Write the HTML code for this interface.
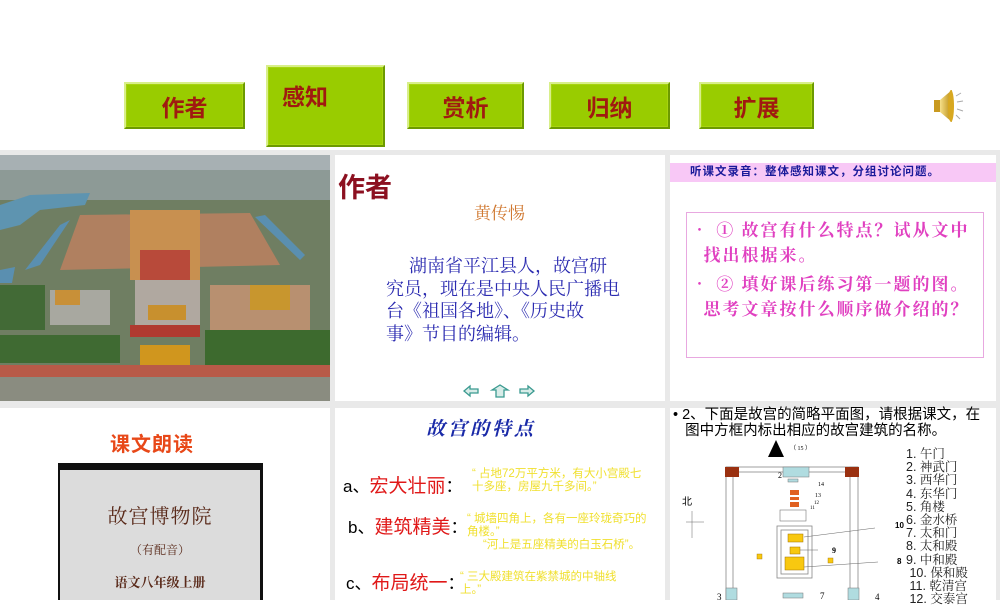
<!DOCTYPE html>
<html><head><meta charset="utf-8"><style>
*{margin:0;padding:0;box-sizing:border-box}
body{width:1000px;height:600px;overflow:hidden;background:#fff;position:relative;font-family:"Liberation Sans","Noto Sans CJK SC",sans-serif}
.a{position:absolute}
.btn{position:absolute;background:#99cc00;border:2px solid #d8ef8a;border-right-color:#6c9a00;border-bottom-color:#6c9a00;box-shadow:inset 0 0 0 1px #a8d410;color:#a01a10;font-weight:bold;font-size:23px;text-align:center;font-family:"Noto Sans CJK SC",sans-serif}
.gray{background:#e9e9e9}
.cjk{font-family:"Noto Serif CJK SC","Noto Sans CJK SC",serif}
.y{color:#f0e030;font-size:11.5px;line-height:13px;white-space:nowrap}
</style></head><body>
<div class="btn" style="left:124px;top:82px;width:121px;height:47px;line-height:44px">作者</div>
<div class="btn" style="left:266px;top:65px;width:119px;height:82px;line-height:56px;text-align:left;padding-left:14px">感知</div>
<div class="btn" style="left:407px;top:82px;width:117px;height:47px;line-height:44px">赏析</div>
<div class="btn" style="left:549px;top:82px;width:121px;height:47px;line-height:44px">归纳</div>
<div class="btn" style="left:699px;top:82px;width:115px;height:47px;line-height:44px">扩展</div>
<svg class="a" style="left:930px;top:88px" width="40" height="36" viewBox="0 0 40 36">
<defs><linearGradient id="sp" x1="0" x2="1"><stop offset="0" stop-color="#f6e08a"/><stop offset="1" stop-color="#b88a10"/></linearGradient></defs>
<rect x="4" y="12" width="7" height="12" fill="#c99a20"/>
<path d="M10 12 L22 2 L22 34 L10 24Z" fill="url(#sp)"/>
<ellipse cx="21" cy="18" rx="3" ry="16" fill="#d8a820"/>
<g stroke="#aaa" stroke-width="1"><line x1="26" y1="8" x2="31" y2="5"/><line x1="27" y1="14" x2="33" y2="13"/><line x1="27" y1="21" x2="33" y2="23"/><line x1="26" y1="27" x2="30" y2="31"/></g>
</svg>
<div class="a gray" style="left:0;top:150px;width:1000px;height:5px"></div>
<div class="a gray" style="left:330px;top:150px;width:5px;height:450px"></div>
<div class="a gray" style="left:665px;top:150px;width:5px;height:450px"></div>
<div class="a gray" style="left:0;top:401px;width:1000px;height:7px"></div>
<div class="a gray" style="left:996px;top:150px;width:4px;height:450px"></div>
<!-- photo -->
<svg class="a" style="left:0;top:155px" width="330" height="246" viewBox="0 0 330 246">
<rect width="330" height="246" fill="#6f7e62"/>
<rect width="330" height="45" fill="#8d9a96"/>
<rect y="0" width="330" height="15" fill="#a7b0b3"/>
<path d="M0 50 L30 40 L90 38 L85 50 L40 55 L20 70 L0 75Z" fill="#5e94b0"/>
<path d="M60 70 L70 65 L40 110 L25 115Z" fill="#5a8fb0"/>
<path d="M255 62 L265 60 L305 100 L300 105Z" fill="#5a8fb0"/>
<path d="M0 115 L15 112 L12 128 L0 128Z" fill="#5a8fb0"/>
<path d="M80 60 L250 58 L280 110 L60 115Z" fill="#b08060"/>
<rect x="130" y="55" width="70" height="70" fill="#c89050"/>
<rect x="140" y="95" width="50" height="30" fill="#b84a3a"/>
<rect x="210" y="130" width="100" height="45" fill="#b89070"/>
<rect x="250" y="130" width="40" height="25" fill="#c8962e"/>
<rect x="50" y="135" width="60" height="35" fill="#a8a8a0"/>
<rect x="55" y="135" width="25" height="15" fill="#c89038"/>
<rect x="135" y="125" width="65" height="50" fill="#b0a8a0"/>
<rect x="148" y="150" width="38" height="15" fill="#c8902e"/>
<rect x="130" y="170" width="70" height="12" fill="#b03a30"/>
<rect x="140" y="190" width="50" height="22" fill="#d0961e"/>
<rect x="0" y="210" width="330" height="12" fill="#b85a48"/>
<rect x="0" y="222" width="330" height="24" fill="#8a8c80"/>
<rect x="0" y="180" width="120" height="28" fill="#3f6a32"/>
<rect x="205" y="175" width="125" height="35" fill="#3d6a2e"/>
<rect x="0" y="130" width="45" height="45" fill="#426a36"/>
</svg>
<!-- author -->
<div class="a" style="left:338px;top:166px;font-size:27px;font-weight:bold;color:#8c1020;font-family:'Noto Sans CJK SC',sans-serif">作者</div>
<div class="a cjk" style="left:474px;top:199px;font-size:17px;color:#d07830">黄传惕</div>
<div class="a cjk" style="left:386px;top:254px;width:270px;font-size:18px;line-height:22.5px;color:#2a2ab0;white-space:nowrap">&nbsp;&nbsp;&nbsp;&nbsp;&nbsp;湖南省平江县人，故宫研<br>究员，现在是中央人民广播电<br>台《祖国各地》、《历史故<br>事》节目的编辑。</div>
<svg class="a" style="left:462px;top:383px" width="76" height="16" viewBox="0 0 76 16"><g fill="#d8ece8" stroke="#3a9a90" stroke-width="1.3"><path d="M2 8 L8 3 L8 6 L16 6 L16 10 L8 10 L8 13Z"/><path d="M30 7 L38 2 L46 7 L42 7 L42 14 L34 14 L34 7Z"/><path d="M72 8 L66 3 L66 6 L58 6 L58 10 L66 10 L66 13Z"/></g></svg>
<!-- questions -->
<div class="a" style="left:670px;top:163px;width:326px;height:19px;background:#f8c8f6;color:#1a1a9a;font-size:11.5px;font-weight:bold;padding-left:20px;line-height:19px;letter-spacing:1px" >听课文录音：整体感知课文，分组讨论问题。</div>
<div class="a" style="left:686px;top:212px;width:298px;height:146px;border:1px solid #e8a8e0;color:#e040c0;font-size:17px;line-height:25px;padding:3px 8px 0 4px;font-family:'Noto Serif CJK SC',serif;letter-spacing:2px;font-weight:bold">
<div>• ① 故宫有什么特点？试从文中<br>&nbsp;&nbsp;找出根据来。</div>
<div style="margin-top:4px">• ② 填好课后练习第一题的图。<br>&nbsp;&nbsp;思考文章按什么顺序做介绍的？</div></div>
<!-- reading -->
<div class="a" style="left:110px;top:428px;font-size:20px;font-weight:bold;color:#e84818;font-family:'Noto Sans CJK SC',sans-serif;letter-spacing:1px">课文朗读</div>
<div class="a" style="left:58px;top:463px;width:205px;height:137px;background:#101010"></div>
<div class="a" style="left:60px;top:470px;width:200px;height:130px;background:#dcdcdc;color:#5a2a1a;text-align:center;font-family:'Noto Serif CJK SC',serif">
<div style="margin-top:30px;font-size:20px;letter-spacing:1px">故宫博物院</div>
<div style="margin-top:12px;font-size:12px">（有配音）</div>
<div style="margin-top:14px;font-size:13px;font-weight:bold">语文八年级上册</div></div>
<!-- features -->
<div class="a cjk" style="left:426px;top:414px;font-size:19px;color:#1a2aa8;font-style:italic;font-weight:bold;letter-spacing:3px">故宫的特点</div>
<div class="a" style="left:343px;top:471px;font-size:17px"><span>a、</span><span style="color:#e01818;font-size:19px">宏大壮丽</span>：</div>
<div class="a" style="left:348px;top:512px;font-size:17px"><span>b、</span><span style="color:#e01818;font-size:19px">建筑精美</span>：</div>
<div class="a" style="left:346px;top:568px;font-size:17px"><span>c、</span><span style="color:#e01818;font-size:19px">布局统一</span>：</div>
<div class="a y" style="left:472px;top:468px">“ 占地72万平方米，有大小宫殿七<br>十多座，房屋九千多间。”</div>
<div class="a y" style="left:467px;top:513px">“ 城墙四角上，各有一座玲珑奇巧的<br>角楼。”<br>&nbsp;&nbsp;&nbsp;&nbsp;&nbsp;“河上是五座精美的白玉石桥”。</div>
<div class="a y" style="left:460px;top:571px">“ 三大殿建筑在紫禁城的中轴线<br>上。”</div>
<!-- map -->
<div class="a" style="left:673px;top:407px;width:326px;font-size:14.5px;line-height:16px;color:#000;white-space:nowrap">• 2、下面是故宫的简略平面图，请根据课文，在<br>&nbsp;&nbsp;&nbsp;图中方框内标出相应的故宫建筑的名称。</div>
<svg class="a" style="left:670px;top:440px" width="230" height="160" viewBox="0 0 230 160" font-family="Liberation Serif" font-size="6">
<path d="M98 17 L106 0 L114 17Z" fill="#000"/>
<text x="120" y="10" font-size="6">（ 15 ）</text>
<g fill="#fff" stroke="#888" stroke-width="0.8">
<rect x="56" y="27" width="132" height="5"/>
<rect x="56" y="27" width="7" height="133"/>
<rect x="180" y="27" width="8" height="133"/>
</g>
<rect x="55" y="27" width="14" height="10" fill="#9a3010"/>
<rect x="175" y="27" width="14" height="10" fill="#9a3010"/>
<rect x="113" y="27" width="26" height="10" fill="#b0dce0" stroke="#777" stroke-width="0.5"/>
<rect x="118" y="39" width="10" height="3" fill="#b0dce0" stroke="#777" stroke-width="0.5"/>
<rect x="120" y="50" width="9" height="5" fill="#e06020"/>
<rect x="120" y="57" width="9" height="3" fill="#e06020"/>
<rect x="120" y="62" width="9" height="5" fill="#e06020"/>
<rect x="110" y="70" width="26" height="11" fill="#fff" stroke="#777" stroke-width="0.6"/>
<rect x="107" y="86" width="35" height="52" fill="#fff" stroke="#888" stroke-width="0.8"/>
<rect x="111" y="90" width="27" height="44" fill="#fff" stroke="#888" stroke-width="0.8"/>
<rect x="118" y="94" width="15" height="8" fill="#f8c810" stroke="#a07000" stroke-width="0.5"/>
<rect x="120" y="107" width="10" height="7" fill="#f8c810" stroke="#a07000" stroke-width="0.5"/>
<rect x="115" y="117" width="19" height="13" fill="#f8c810" stroke="#a07000" stroke-width="0.5"/>
<rect x="87" y="114" width="5" height="5" fill="#f8c810" stroke="#a07000" stroke-width="0.4"/>
<rect x="158" y="118" width="5" height="5" fill="#f8c810" stroke="#a07000" stroke-width="0.4"/>
<g stroke="#666" stroke-width="0.5"><line x1="134" y1="97" x2="205" y2="88"/><line x1="130" y1="110" x2="148" y2="110"/><line x1="134" y1="127" x2="208" y2="122"/><line x1="22" y1="71" x2="22" y2="98"/><line x1="16" y1="82" x2="34" y2="82"/></g>
<rect x="56" y="148" width="11" height="12" fill="#b0dce0" stroke="#777" stroke-width="0.5"/>
<rect x="178" y="148" width="11" height="12" fill="#b0dce0" stroke="#777" stroke-width="0.5"/>
<rect x="113" y="153" width="20" height="5" fill="#b0dce0" stroke="#777" stroke-width="0.5"/>
<text x="12" y="65" font-size="10" font-family="Noto Sans CJK SC">北</text>
<text x="108" y="38" font-size="8">2</text><text x="148" y="46">14</text><text x="145" y="57">13</text><text x="144" y="64" font-size="5">12</text><text x="140" y="69" font-size="5">11</text>
<text x="162" y="113" font-size="8" font-weight="bold">9</text>
<text x="47" y="160" font-size="9">3</text><text x="150" y="159" font-size="9">7</text><text x="205" y="160" font-size="9">4</text>
</svg>
<div class="a" style="left:906px;top:448px;font-size:12.5px;line-height:13.2px;color:#222;white-space:nowrap;font-family:'Liberation Sans','Noto Serif CJK SC',sans-serif">1. 午门<br>2. 神武门<br>3. 西华门<br>4. 东华门<br>5. 角楼<br>6. 金水桥<br>7. 太和门<br>8. 太和殿<br>9. 中和殿<br>&nbsp;10. 保和殿<br>&nbsp;11. 乾清宫<br>&nbsp;12. 交泰宫</div>
<div class="a" style="left:895px;top:521px;font-size:8px;font-weight:bold">10</div>
<div class="a" style="left:897px;top:557px;font-size:8px;font-weight:bold">8</div>
</body></html>
